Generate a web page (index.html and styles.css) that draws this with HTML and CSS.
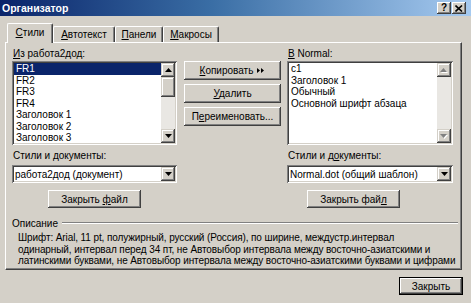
FILE: index.html
```html
<!DOCTYPE html>
<html lang="ru">
<head>
    <meta charset="UTF-8">
    <title>Организатор</title>
    <link rel="stylesheet" href="styles.css">
</head>
<body>
    <div class="window">
        <div class="titlebar">
            <span class="title">Организатор</span>
            <div class="caption-buttons">
                <span class="cap-btn help">?</span>
                <span class="cap-btn">
                    <svg width="8" height="7" viewBox="0 0 8 7"><path d="M0.5 0.5 L7 6.5 M7 0.5 L0.5 6.5" stroke="#000" stroke-width="1.6"/></svg>
                </span>
            </div>
        </div>

        <div class="tabs">
            <div class="tab tab-styles active"><span><u>С</u>тили</span></div>
            <div class="tab tab-autotext"><span><u>А</u>втотекст</span></div>
            <div class="tab tab-panels"><span><u>П</u>анели</span></div>
            <div class="tab tab-macros"><span><u>М</u>акросы</span></div>
        </div>

        <div class="panel">
            <div class="columns">
                <div class="col">
                    <div class="label"><u>И</u>з работа2дод:</div>
                    <div class="listbox">
                        <ul class="items">
                            <li class="selected">FR1</li>
                            <li>FR2</li>
                            <li>FR3</li>
                            <li>FR4</li>
                            <li>Заголовок 1</li>
                            <li>Заголовок 2</li>
                            <li>Заголовок 3</li>
                        </ul>
                        <div class="scrollbar">
                            <span class="sb-btn"><svg width="7" height="4" viewBox="0 0 7 4"><path d="M3.5 0 L7 4 L0 4 Z" fill="#000"/></svg></span>
                            <span class="sb-btn sb-thumb"></span>
                            <span class="sb-track"></span>
                            <span class="sb-btn"><svg width="7" height="4" viewBox="0 0 7 4"><path d="M0 0 L7 0 L3.5 4 Z" fill="#000"/></svg></span>
                        </div>
                    </div>
                    <div class="label label-docs">Стили и <u>д</u>окументы:</div>
                    <div class="combo">
                        <span class="combo-text">работа2дод (документ)</span>
                        <span class="sb-btn combo-btn"><svg width="7" height="4" viewBox="0 0 7 4"><path d="M0 0 L7 0 L3.5 4 Z" fill="#000"/></svg></span>
                    </div>
                    <button class="btn btn-file btn-file-left"><span>Закрыть <u>ф</u>айл</span></button>
                </div>

                <div class="col col-mid">
                    <button class="btn"><span><u>К</u>опировать</span>
                        <svg class="arrows" width="8" height="5" viewBox="0 0 8 5"><path d="M0 0 L3 2.5 L0 5 Z M4 0 L7 2.5 L4 5 Z" fill="#000"/></svg>
                    </button>
                    <button class="btn"><span><u>У</u>далить</span></button>
                    <button class="btn"><span>П<u>е</u>реименовать...</span></button>
                </div>

                <div class="col col-right">
                    <div class="label"><u>В</u> Normal:</div>
                    <div class="listbox">
                        <ul class="items">
                            <li>c1</li>
                            <li>Заголовок 1</li>
                            <li>Обычный</li>
                            <li>Основной шрифт абзаца</li>
                        </ul>
                        <div class="scrollbar">
                            <span class="sb-btn"><svg width="8" height="5" viewBox="0 0 8 5"><path d="M4.5 1 L8 5 L1 5 Z" fill="#fff"/><path d="M3.5 0 L7 4 L0 4 Z" fill="#808080"/></svg></span>
                            <span class="sb-track"></span>
                            <span class="sb-btn"><svg width="8" height="5" viewBox="0 0 8 5"><path d="M1 1 L8 1 L4.5 5 Z" fill="#fff"/><path d="M0 0 L7 0 L3.5 4 Z" fill="#808080"/></svg></span>
                        </div>
                    </div>
                    <div class="label label-docs">Стили и д<u>о</u>кументы:</div>
                    <div class="combo">
                        <span class="combo-text">Normal.dot (общий шаблон)</span>
                        <span class="sb-btn combo-btn"><svg width="7" height="4" viewBox="0 0 7 4"><path d="M0 0 L7 0 L3.5 4 Z" fill="#000"/></svg></span>
                    </div>
                    <button class="btn btn-file btn-file-right"><span>Закрыть фай<u>л</u></span></button>
                </div>
            </div>

            <div class="group">
                <div class="group-head">
                    <span>Описание</span>
                    <span class="group-line"></span>
                </div>
                <p class="desc">
                    Шрифт: Arial, 11 pt, полужирный, русский (Россия), по ширине, междустр.интервал<br>
                    одинарный, интервал перед 34 пт, не Автовыбор интервала между восточно-азиатскими и<br>
                    латинскими буквами, не Автовыбор интервала между восточно-азиатскими буквами и цифрами
                </p>
            </div>
        </div>

        <div class="footer">
            <button class="btn btn-default"><span>Закрыть</span></button>
        </div>
    </div>
</body>
</html>
```

FILE: styles.css
```css
* {
    margin: 0;
    padding: 0;
    box-sizing: border-box;
}

body {
    font-family: 'Liberation Sans', Arial, sans-serif;
    font-size: 10px;
    color: #000;
    background: #d4d0c8;
}

u {
    text-decoration: underline;
    text-underline-offset: 1px;
}

.window {
    width: 471px;
    height: 303px;
    background: #d4d0c8;
    display: flex;
    flex-direction: column;
}

/* title bar */
.titlebar {
    height: 16px;
    display: flex;
    align-items: center;
    justify-content: space-between;
    padding: 0 5px 0 2px;
    background: linear-gradient(90deg, #0a246a 0%, #3a6ea5 45%, #a6caf0 100%);
}

.title {
    color: #fff;
    font-weight: bold;
    font-size: 10.5px;
}

.caption-buttons {
    display: flex;
}

.cap-btn {
    width: 14px;
    height: 12px;
    display: flex;
    align-items: center;
    justify-content: center;
    background: #d4d0c8;
    font-weight: bold;
    font-size: 10px;
    line-height: 1;
    box-shadow: inset -1px -1px #404040, inset 1px 1px #fff, inset -2px -2px #808080;
}

.cap-btn.help {
    margin-right: 1px;
}

/* tabs */
.tabs {
    margin-top: 7px;
    height: 19px;
    padding-left: 7px;
    display: flex;
    align-items: flex-end;
}

.tab {
    height: 16px;
    display: flex;
    align-items: center;
    justify-content: center;
    border-top: 1px solid #fff;
    border-left: 1px solid #fff;
    border-right: 1px solid #404040;
    box-shadow: inset -1px 0 #808080;
    border-radius: 2px 2px 0 0;
}

.tab.active {
    height: 20px;
    margin-bottom: -1px;
    position: relative;
    z-index: 1;
    background: #d4d0c8;
    padding-bottom: 3px;
}

.tab-styles { width: 46px; }
.tab-autotext { width: 62px; }
.tab-panels { width: 48px; }
.tab-macros { width: 56px; }

/* tab page */
.panel {
    margin-left: 5px;
    width: 457px;
    height: 228px;
    border-top: 1px solid #fff;
    border-left: 1px solid #fff;
    border-right: 1px solid #404040;
    border-bottom: 1px solid #404040;
    box-shadow: inset -1px -1px #808080;
    padding: 4px 0 0 6px;
}

.columns {
    display: flex;
}

.col {
    width: 165px;
    display: flex;
    flex-direction: column;
}

.col-mid {
    width: 97px;
    margin-left: 7px;
    padding-top: 14px;
    gap: 4px;
}

.col-right {
    width: 166px;
    margin-left: 6px;
}

.label {
    height: 14px;
    line-height: 13px;
    padding-left: 1px;
}

.label-docs {
    margin-top: 4px;
    height: 16px;
    line-height: 14px;
}

.listbox {
    height: 84px;
    display: flex;
    padding: 2px;
    background: #fff;
    box-shadow: inset 1px 1px #808080, inset -1px -1px #fff, inset 2px 2px #404040, inset -2px -2px #d4d0c8;
}

.items {
    list-style: none;
    flex: 1;
    line-height: 11.5px;
}

.items li {
    padding-left: 2px;
    white-space: nowrap;
}

.items li.selected {
    background: #0a246a;
    color: #fff;
}

.scrollbar {
    width: 14px;
    display: flex;
    flex-direction: column;
}

.sb-btn {
    width: 14px;
    height: 14px;
    flex: none;
    display: flex;
    align-items: center;
    justify-content: center;
    background: #d4d0c8;
    box-shadow: inset -1px -1px #404040, inset 1px 1px #d4d0c8, inset -2px -2px #808080, inset 2px 2px #fff;
}

.sb-thumb {
    height: 20px;
}

.sb-track {
    flex: 1;
    background: #e9e7e3;
}

.combo {
    height: 18px;
    display: flex;
    align-items: center;
    padding: 2px;
    background: #fff;
    box-shadow: inset 1px 1px #808080, inset -1px -1px #fff, inset 2px 2px #404040, inset -2px -2px #d4d0c8;
}

.combo-text {
    flex: 1;
    padding-left: 1px;
    white-space: nowrap;
}

/* buttons */
.btn {
    font: inherit;
    color: #000;
    height: 19px;
    border: none;
    background: #d4d0c8;
    display: flex;
    align-items: center;
    justify-content: center;
    gap: 4px;
    white-space: nowrap;
    box-shadow: inset -1px -1px #404040, inset 1px 1px #fff, inset -2px -2px #808080, inset 2px 2px #d4d0c8;
}

.btn-file {
    width: 93px;
    height: 18px;
    margin-top: 7px;
}

.btn-file-left { margin-left: 36px; }
.btn-file-right { margin-left: 20px; }

/* description group */
.group {
    margin-top: 8px;
    margin-right: 3px;
}

.group-head {
    display: flex;
    align-items: center;
    height: 14px;
}

.group-line {
    flex: 1;
    margin-left: 4px;
    height: 2px;
    border-top: 1px solid #808080;
    border-bottom: 1px solid #fff;
}

.desc {
    margin-top: 2px;
    padding-left: 6px;
    line-height: 11.5px;
    letter-spacing: -0.1px;
    white-space: nowrap;
}

.footer {
    display: flex;
    justify-content: flex-end;
    padding: 7px 8px 0 0;
}

.btn-default {
    width: 64px;
    height: 18px;
    border: 1px solid #000;
}
```
